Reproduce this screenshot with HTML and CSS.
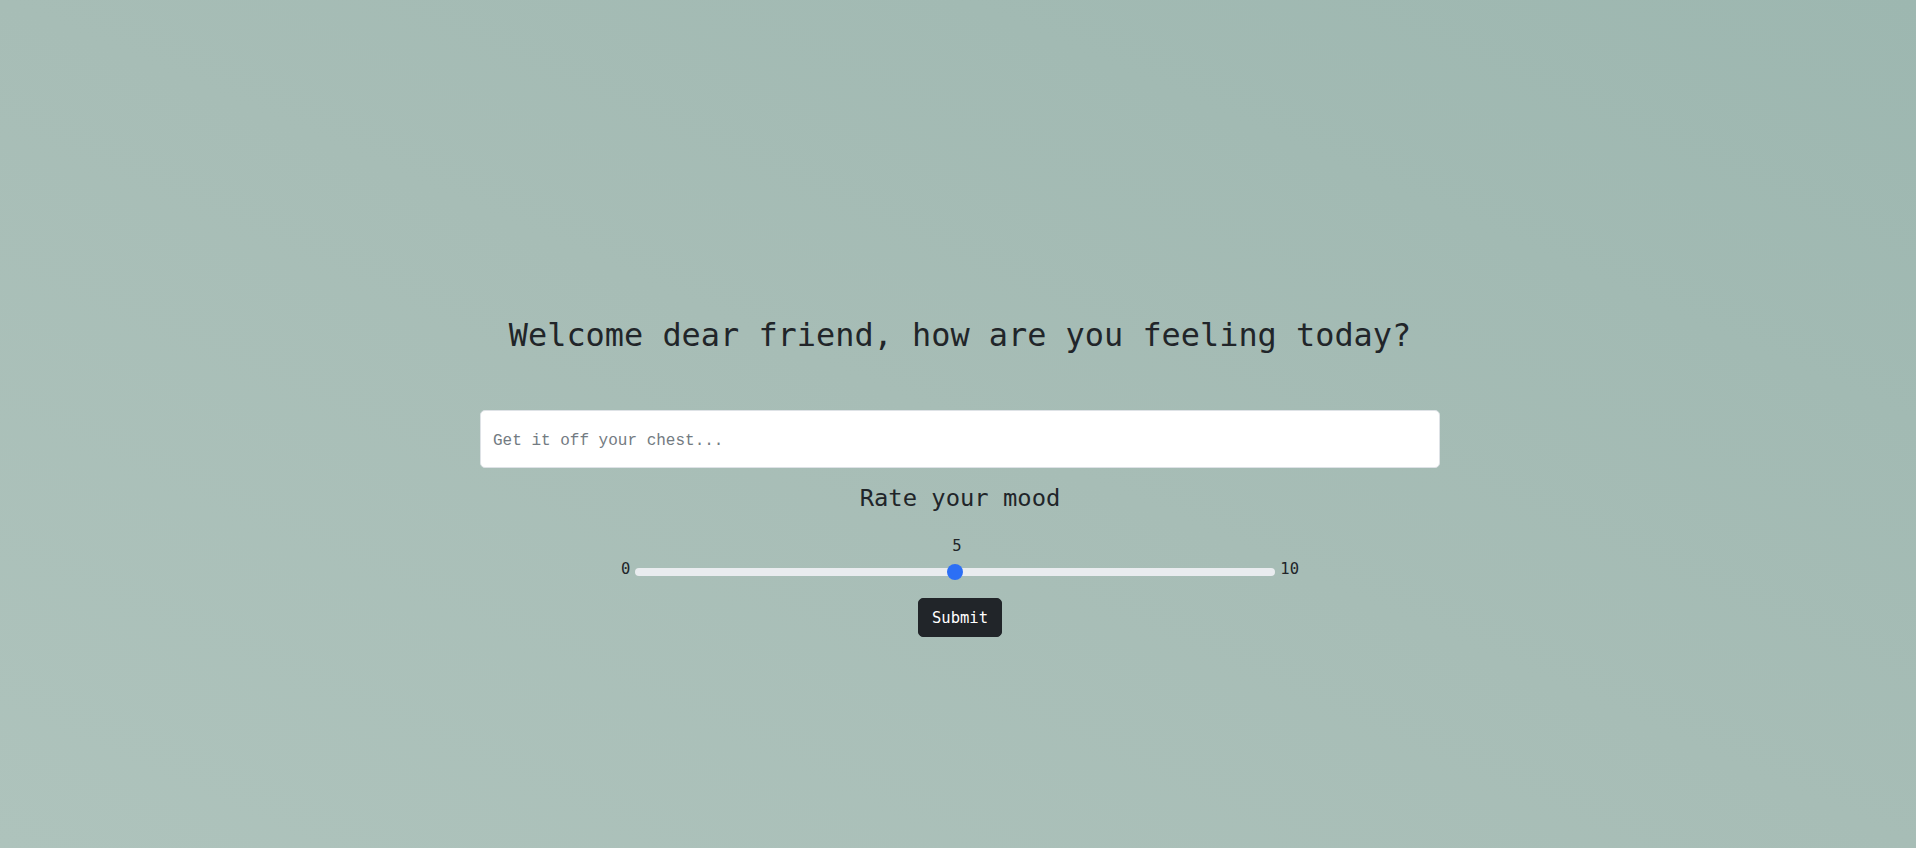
FILE: index.html
```html
<!DOCTYPE html>
<html lang="en">
<head>
<meta charset="utf-8">
<title>Mood</title>
<link rel="stylesheet" href="styles.css">
</head>
<body>
<main class="wrap">
  <h1 class="title">Welcome dear friend, how are you feeling today?</h1>
  <input class="entry" type="text" placeholder="Get it off your chest...">
  <h3 class="rate">Rate your mood</h3>
  <div class="value">5</div>
  <div class="slider-row">
    <span class="lbl">0</span>
    <input class="range" type="range" min="0" max="10" value="5">
    <span class="lbl">10</span>
  </div>
  <button class="submit" type="button">Submit</button>
</main>
</body>
</html>
```

FILE: styles.css
```css
html, body {
  margin: 0;
  padding: 0;
}
body {
  box-sizing: border-box;
  min-height: 100vh;
  padding-left: 4px;
  background: linear-gradient(to top right, #aec3bc 0%, #a7bdb6 50%, #9db7b0 100%);
  font-family: "DejaVu Sans Mono", "Liberation Mono", monospace;
  color: #212529;
}
.wrap {
  width: 960px;
  margin: 0 auto;
  padding-top: 316px;
  display: flex;
  flex-direction: column;
  align-items: center;
}
.title {
  margin: 0;
  font-size: 31.9px;
  font-weight: 400;
  line-height: 38px;
  letter-spacing: 0;
}
.entry {
  box-sizing: border-box;
  width: 960px;
  height: 58px;
  margin-top: 56px;
  padding: 3px 12px 0;
  border: 1px solid #dee2e6;
  border-radius: 5px;
  background: #fff;
  font-family: "Liberation Mono", monospace;
  font-size: 16px;
  color: #212529;
  outline: none;
}
.entry::placeholder {
  color: #737b82;
}
.rate {
  margin: 16px 0 0;
  font-size: 23.8px;
  font-weight: 400;
  line-height: 29px;
}
.value {
  margin-top: 21px;
  font-size: 15.5px;
  line-height: 24px;
  transform: translateX(-3px);
}
.slider-row {
  margin-top: 4px;
  display: flex;
  align-items: center;
  gap: 5px;
  font-size: 15.5px;
  line-height: 20px;
}
.lbl {
  transform: translateY(-3px);
}
.range {
  -webkit-appearance: none;
  appearance: none;
  width: 640px;
  height: 16px;
  margin: 0;
  background: transparent;
}
.range::-webkit-slider-runnable-track {
  height: 8px;
  border-radius: 4px;
  background: #e9ecef;
}
.range::-webkit-slider-thumb {
  -webkit-appearance: none;
  appearance: none;
  width: 16px;
  height: 16px;
  margin-top: -4px;
  border: 0;
  border-radius: 50%;
  background: #2c6ff5;
}
.submit {
  margin-top: 16px;
  height: 39px;
  padding: 0 13px;
  border: 1px solid #212529;
  border-radius: 5px;
  background: #212529;
  color: #fff;
  font-family: "DejaVu Sans Mono", "Liberation Mono", monospace;
  font-size: 15.5px;
  line-height: 24px;
}
```
